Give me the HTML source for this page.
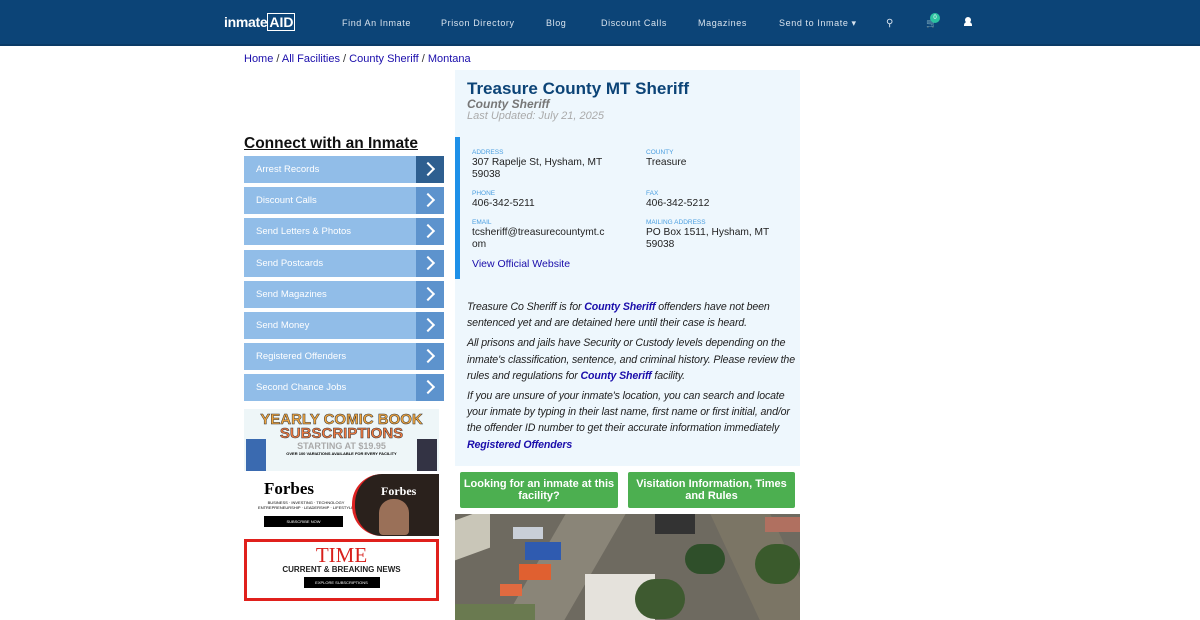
<!DOCTYPE html>
<html><head><meta charset="utf-8"><style>
*{box-sizing:border-box;margin:0;padding:0}
body{width:1200px;height:620px;overflow:hidden;background:#fff;font-family:"Liberation Sans",Arial,sans-serif;position:relative}
.nav{position:absolute;left:0;top:0;width:1200px;height:46px;background:#0c4477;border-bottom:2px solid #0a3a66}
.nav span{position:absolute;top:18px;color:#d8e3ee;font-size:9px;letter-spacing:.6px}
.logo{position:absolute;left:224px;top:14px;color:#fff;font-weight:bold;font-size:14px;letter-spacing:-.3px}
.crumb{position:absolute;left:244px;top:53px;font-size:11px;color:#333}
.crumb a{color:#1a0dab;text-decoration:none}
a{color:#1a0dab}
.side{position:absolute;left:244px;top:135px;width:200px}
.side h2{font-size:15.5px;font-weight:bold;text-decoration:underline;color:#111;margin-bottom:3px}
.btn{position:relative;height:27px;background:#91bde8;margin-bottom:4.2px;color:#fff;font-size:9.5px;line-height:27px;padding-left:12px}
.btn i{position:absolute;right:0;top:0;width:28px;height:27px;background:#5d93cd}
.btn i:after{content:"";position:absolute;left:7px;top:8px;width:8px;height:8px;border-right:2px solid #fff;border-top:2px solid #fff;transform:rotate(45deg)}
.ad{position:absolute;left:244px;width:195px;height:62px}
.card{position:absolute;left:455px;top:70px;width:345px;height:396px;background:#eef7fd}
.card h1{position:absolute;left:12px;top:9px;font-size:17px;color:#0c4477}
.sub{position:absolute;left:12px;top:27px;font-size:12px;font-style:italic;font-weight:bold;color:#777}
.upd{position:absolute;left:12px;top:40px;font-size:11px;font-style:italic;color:#aaa}
.bar{position:absolute;left:0;top:67px;width:5px;height:142px;background:#1e90e8}
.lbl{position:absolute;font-size:6.5px;color:#4a9ee0}
.val{position:absolute;font-size:10.2px;color:#222;line-height:11.5px}
.desc{position:absolute;left:12px;top:229px;width:331px;font-size:10.6px;letter-spacing:-0.12px;font-style:italic;line-height:16.2px;color:#222}
.desc p{margin-bottom:4px}
.desc b a{color:#1a0dab;text-decoration:none}
.gb{position:absolute;top:472px;height:36px;background:#4caf50;color:#fff;font-weight:bold;font-size:11px;text-align:center;border-radius:2px;line-height:12px;padding-top:6px}
.map{position:absolute;left:455px;top:514px;width:345px;height:106px;background:#6e6a60;overflow:hidden}
.map div{position:absolute}
</style></head><body>
<div class="nav">
<div class="logo">inmate<span style="position:static;color:#fff;font-size:14px;border:1px solid #fff;padding:0 1px;letter-spacing:0">AID</span></div>
<span style="left:342px">Find An Inmate</span>
<span style="left:441px">Prison Directory</span>
<span style="left:546px">Blog</span>
<span style="left:601px">Discount Calls</span>
<span style="left:698px">Magazines</span>
<span style="left:779px">Send to Inmate ▾</span>
<span style="left:886px;font-size:10px">&#9906;</span>
<span style="left:926px;font-size:9px">🛒</span>
<div style="position:absolute;left:930px;top:13px;width:10px;height:10px;border-radius:5px;background:#2bc2a0;color:#fff;font-size:6px;text-align:center;line-height:10px">0</div>
<div style="position:absolute;left:965px;top:17px;width:6px;height:6px;border-radius:3px;background:#fff"></div>
<div style="position:absolute;left:964px;top:22px;width:8px;height:4px;background:#fff;border-radius:3px 3px 0 0"></div>
</div>
<div class="crumb"><a>Home</a> / <a>All Facilities</a> / <a>County Sheriff</a> / <a>Montana</a></div>
<div class="side"><h2>Connect with an Inmate</h2>
<div class="btn">Arrest Records<i style="background:#2e5f90"></i></div>
<div class="btn">Discount Calls<i></i></div>
<div class="btn">Send Letters &amp; Photos<i></i></div>
<div class="btn">Send Postcards<i></i></div>
<div class="btn">Send Magazines<i></i></div>
<div class="btn">Send Money<i></i></div>
<div class="btn">Registered Offenders<i></i></div>
<div class="btn">Second Chance Jobs<i></i></div>
</div>
<div class="ad" style="top:409px;background:#eef6f8;text-align:center">
<div style="color:#f0a640;font-weight:bold;font-size:15px;line-height:14px;margin-top:4px;-webkit-text-stroke:.5px #333">YEARLY COMIC BOOK</div>
<div style="color:#f07a40;font-weight:bold;font-size:15px;line-height:14px;-webkit-text-stroke:.5px #333">SUBSCRIPTIONS</div>
<div style="color:#aaa;font-size:9px;font-weight:bold">STARTING AT $19.95</div>
<div style="font-size:4px;font-weight:bold">OVER 100 VARIATIONS AVAILABLE FOR EVERY FACILITY</div>
<div style="position:absolute;left:2px;top:30px;width:20px;height:32px;background:#3a6ab0"></div>
<div style="position:absolute;right:2px;top:30px;width:20px;height:32px;background:#334"></div>
</div>
<div class="ad" style="top:474px;background:#fff">
<div style="position:absolute;left:20px;top:5px;font-family:'Liberation Serif',serif;font-weight:bold;font-size:17px">Forbes</div>
<div style="position:absolute;left:12px;top:26px;font-size:4px;width:100px;text-align:center">BUSINESS · INVESTING · TECHNOLOGY<br>ENTREPRENEURSHIP · LEADERSHIP · LIFESTYLE</div>
<div style="position:absolute;left:20px;top:42px;width:79px;height:11px;background:#000;color:#fff;font-size:4px;text-align:center;line-height:11px">SUBSCRIBE NOW</div>
<div style="position:absolute;left:108px;top:0;width:87px;height:62px;background:#2a211c;border-radius:30px 0 0 30px;border-left:3px solid #d22"></div>
<div style="position:absolute;left:137px;top:10px;color:#fff;font-family:'Liberation Serif',serif;font-weight:bold;font-size:12px">Forbes</div>
<div style="position:absolute;left:135px;top:25px;width:30px;height:36px;background:#9a7058;border-radius:14px 14px 4px 4px"></div>
</div>
<div class="ad" style="top:539px;border:3px solid #e0201c;text-align:center">
<div style="color:#d8201c;font-family:'Liberation Serif',serif;font-size:21px;line-height:20px;margin-top:3px">TIME</div>
<div style="font-size:8px;font-weight:bold;color:#222">CURRENT &amp; BREAKING NEWS</div>
<div style="margin:3px auto 0;width:76px;height:11px;background:#000;color:#fff;font-size:4px;line-height:11px">EXPLORE SUBSCRIPTIONS</div>
</div>
<div class="card">
<h1>Treasure County MT Sheriff</h1>
<div class="sub">County Sheriff</div>
<div class="upd">Last Updated: July 21, 2025</div>
<div class="bar"></div>
<div class="lbl" style="left:17px;top:79px">ADDRESS</div>
<div class="val" style="left:17px;top:87px">307 Rapelje St, Hysham, MT<br>59038</div>
<div class="lbl" style="left:191px;top:79px">COUNTY</div>
<div class="val" style="left:191px;top:87px">Treasure</div>
<div class="lbl" style="left:17px;top:120px">PHONE</div>
<div class="val" style="left:17px;top:128px">406-342-5211</div>
<div class="lbl" style="left:191px;top:120px">FAX</div>
<div class="val" style="left:191px;top:128px">406-342-5212</div>
<div class="lbl" style="left:17px;top:149px">EMAIL</div>
<div class="val" style="left:17px;top:157px">tcsheriff@treasurecountymt.c<br>om</div>
<div class="lbl" style="left:191px;top:149px">MAILING ADDRESS</div>
<div class="val" style="left:191px;top:157px">PO Box 1511, Hysham, MT<br>59038</div>
<div class="val" style="left:17px;top:189px;font-size:10.5px"><a style="color:#1a0dab">View Official Website</a></div>
<div class="desc">
<p>Treasure Co Sheriff is for <b><a>County Sheriff</a></b> offenders have not been<br>sentenced yet and are detained here until their case is heard.</p>
<p>All prisons and jails have Security or Custody levels depending on the<br>inmate's classification, sentence, and criminal history. Please review the<br>rules and regulations for <b><a>County Sheriff</a></b> facility.</p>
<p>If you are unsure of your inmate's location, you can search and locate<br>your inmate by typing in their last name, first name or first initial, and/or<br>the offender ID number to get their accurate information immediately<br><b><a>Registered Offenders</a></b></p>
</div>
</div>
<div class="gb" style="left:460px;width:158px">Looking for an inmate at this<br>facility?</div>
<div class="gb" style="left:628px;width:167px">Visitation Information, Times<br>and Rules</div>
<div class="map">
<div style="left:0;top:0;width:35px;height:40px;background:#c9c6b8;transform:skewY(-20deg)"></div>
<div style="left:80px;top:0;width:60px;height:106px;background:#8a8578;transform:skewX(-30deg)"></div>
<div style="left:58px;top:13px;width:30px;height:12px;background:#c9cfd8"></div>
<div style="left:70px;top:28px;width:36px;height:18px;background:#2f5bb0"></div>
<div style="left:64px;top:50px;width:32px;height:16px;background:#e06030"></div>
<div style="left:45px;top:70px;width:22px;height:12px;background:#e06a40"></div>
<div style="left:130px;top:60px;width:70px;height:46px;background:#e5e2dc"></div>
<div style="left:180px;top:65px;width:50px;height:40px;background:#3e5a30;border-radius:20px"></div>
<div style="left:230px;top:30px;width:40px;height:30px;background:#2f4f2a;border-radius:15px"></div>
<div style="left:200px;top:0;width:40px;height:20px;background:#333"></div>
<div style="left:280px;top:0;width:60px;height:106px;background:#7b7565;transform:skewX(25deg)"></div>
<div style="left:300px;top:30px;width:45px;height:40px;background:#3a5a2c;border-radius:20px"></div>
<div style="left:310px;top:3px;width:35px;height:15px;background:#b07060"></div>
<div style="left:0;top:90px;width:80px;height:16px;background:#6a7a50"></div>
</div>
</body></html>
